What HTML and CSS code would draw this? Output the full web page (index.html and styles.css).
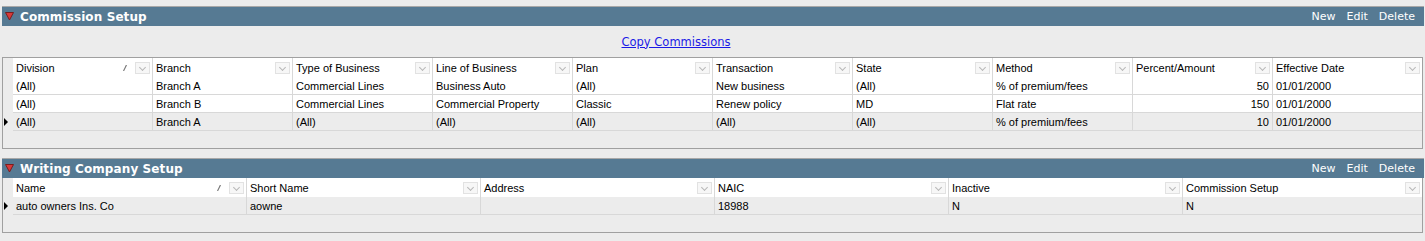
FILE: index.html
```html
<!DOCTYPE html>
<html lang="en">
<head>
  <meta charset="UTF-8" />
  <title>Commission Setup</title>
  <link rel="stylesheet" href="styles.css">
</head>
<body>
  <div class="panel first">
    <div class="bar">
      <svg class="toggle" width="9" height="9" viewBox="0 0 9 9"><polygon points="0.5,0.5 8.5,0.5 4.5,8" fill="#d83a3a" stroke="#7a1d1d" stroke-width="1"/></svg>
      <span class="title">Commission Setup</span>
      <div class="actions">
        <span>New</span>
        <span>Edit</span>
        <span>Delete</span>
      </div>
    </div>
    <div class="toolbar">
      <a href="#" class="link">Copy Commissions</a>
    </div>
    <div class="grid boxed">
      <div class="row head cols10">
        <div class="sel"></div>
        <div class="cell">Division<svg class="sort" width="4" height="6" viewBox="0 0 4 6"><line x1="3.5" y1="0" x2="0.5" y2="6" stroke="#777" stroke-width="1.2"/></svg><span class="filter"></span></div>
        <div class="cell">Branch<span class="filter"></span></div>
        <div class="cell">Type of Business<span class="filter"></span></div>
        <div class="cell">Line of Business<span class="filter"></span></div>
        <div class="cell">Plan<span class="filter"></span></div>
        <div class="cell">Transaction<span class="filter"></span></div>
        <div class="cell">State<span class="filter"></span></div>
        <div class="cell">Method<span class="filter"></span></div>
        <div class="cell">Percent/Amount<span class="filter"></span></div>
        <div class="cell">Effective Date<span class="filter"></span></div>
      </div>
      <div class="row data cols10">
        <div class="sel"></div>
        <div class="cell">(All)</div>
        <div class="cell">Branch A</div>
        <div class="cell">Commercial Lines</div>
        <div class="cell">Business Auto</div>
        <div class="cell">(All)</div>
        <div class="cell">New business</div>
        <div class="cell">(All)</div>
        <div class="cell">% of premium/fees</div>
        <div class="cell num">50</div>
        <div class="cell">01/01/2000</div>
      </div>
      <div class="row data cols10">
        <div class="sel"></div>
        <div class="cell">(All)</div>
        <div class="cell">Branch B</div>
        <div class="cell">Commercial Lines</div>
        <div class="cell">Commercial Property</div>
        <div class="cell">Classic</div>
        <div class="cell">Renew policy</div>
        <div class="cell">MD</div>
        <div class="cell">Flat rate</div>
        <div class="cell num">150</div>
        <div class="cell">01/01/2000</div>
      </div>
      <div class="row data cols10 current">
        <div class="sel"><span class="arrow"></span></div>
        <div class="cell">(All)</div>
        <div class="cell">Branch A</div>
        <div class="cell">(All)</div>
        <div class="cell">(All)</div>
        <div class="cell">(All)</div>
        <div class="cell">(All)</div>
        <div class="cell">(All)</div>
        <div class="cell">% of premium/fees</div>
        <div class="cell num">10</div>
        <div class="cell">01/01/2000</div>
      </div>
      <div class="empty"></div>
    </div>
  </div>

  <div class="panel second">
    <div class="bar">
      <svg class="toggle" width="9" height="9" viewBox="0 0 9 9"><polygon points="0.5,0.5 8.5,0.5 4.5,8" fill="#d83a3a" stroke="#7a1d1d" stroke-width="1"/></svg>
      <span class="title">Writing Company Setup</span>
      <div class="actions">
        <span>New</span>
        <span>Edit</span>
        <span>Delete</span>
      </div>
    </div>
    <div class="grid">
      <div class="row head cols6">
        <div class="sel"></div>
        <div class="cell">Name<svg class="sort" width="4" height="6" viewBox="0 0 4 6"><line x1="3.5" y1="0" x2="0.5" y2="6" stroke="#777" stroke-width="1.2"/></svg><span class="filter"></span></div>
        <div class="cell">Short Name<span class="filter"></span></div>
        <div class="cell">Address<span class="filter"></span></div>
        <div class="cell">NAIC<span class="filter"></span></div>
        <div class="cell">Inactive<span class="filter"></span></div>
        <div class="cell">Commission Setup<span class="filter"></span></div>
      </div>
      <div class="row data cols6 current">
        <div class="sel"><span class="arrow"></span></div>
        <div class="cell">auto owners Ins. Co</div>
        <div class="cell">aowne</div>
        <div class="cell"></div>
        <div class="cell">18988</div>
        <div class="cell">N</div>
        <div class="cell">N</div>
      </div>
      <div class="empty"></div>
    </div>
  </div>
</body>
</html>
```

FILE: styles.css
```css
* {
  box-sizing: border-box;
}

body {
  margin: 0;
  padding: 0;
  background-color: #ececec;
  font-family: "Liberation Sans", Arial, sans-serif;
  font-size: 11px;
  color: #000;
}

.panel {
  margin-left: 2px;
  margin-right: 1px;
  border-top: 1px solid #a8a8a8;
}

.panel.first {
  margin-top: 6px;
}

.panel.second {
  margin-top: 9px;
}

.bar {
  height: 19px;
  background-color: #567a93;
  display: flex;
  align-items: center;
  color: #fff;
  font-family: "DejaVu Sans", Verdana, sans-serif;
}

.bar .toggle {
  margin-left: 3px;
  margin-right: 6px;
}

.bar .title {
  font-weight: 700;
  font-size: 12px;
  letter-spacing: 0.1px;
}

.bar .actions {
  margin-left: auto;
  display: flex;
  gap: 11px;
  font-size: 11px;
  margin-right: 9px;
}

/* link sits a bit left of the page centre */
.toolbar {
  height: 31px;
  display: flex;
  align-items: center;
  justify-content: center;
  padding-right: 74px;
}

.toolbar .link {
  font-family: "DejaVu Sans", Verdana, sans-serif;
  font-size: 11.5px;
  color: #1a1ae6;
  text-decoration: underline;
}

.grid {
  margin-right: 1px;
  border-left: 1px solid #a0a0a0;
  border-right: 1px solid #a0a0a0;
  border-bottom: 1px solid #a0a0a0;
  background-color: #ececec;
}

.grid.boxed {
  border-top: 1px solid #a0a0a0;
}

.row {
  display: grid;
}

.cols10 {
  grid-template-columns: 10px repeat(9, 140px) 1fr;
}

.cols6 {
  grid-template-columns: 10px repeat(5, 234px) 1fr;
}

.row.head {
  height: 19px;
}

.row.data {
  height: 18px;
}

.row .sel {
  background-color: #ececec;
  display: flex;
  align-items: center;
}

.row .cell {
  background-color: #fff;
  border-right: 1px solid #d8d8d8;
  padding-left: 3px;
  display: flex;
  align-items: center;
  white-space: nowrap;
  overflow: hidden;
}

.row .cell:last-child {
  border-right: none;
}

.row.data .cell {
  border-bottom: 1px solid #d8d8d8;
}

.row.current .cell {
  background-color: #ececec;
}

.row .cell.num {
  justify-content: flex-end;
  padding-right: 3px;
}

.row.head .cell {
  padding-top: 1px;
}

.sort {
  margin-left: auto;
  margin-right: 8px;
}

.filter {
  margin-left: auto;
  margin-right: 2px;
  width: 15px;
  height: 12px;
  border: 1px solid #e2e2e2;
  background-color: #f7f7f7;
  position: relative;
}

.sort + .filter {
  margin-left: 0;
}

.filter::after {
  content: "";
  position: absolute;
  left: 4px;
  top: 2px;
  width: 4px;
  height: 4px;
  border-right: 1px solid #b8b8b8;
  border-bottom: 1px solid #b8b8b8;
  transform: rotate(45deg);
}

.arrow {
  width: 0;
  height: 0;
  margin-left: 1px;
  border-top: 4px solid transparent;
  border-bottom: 4px solid transparent;
  border-left: 4px solid #000;
}

.empty {
  height: 17px;
}
```
